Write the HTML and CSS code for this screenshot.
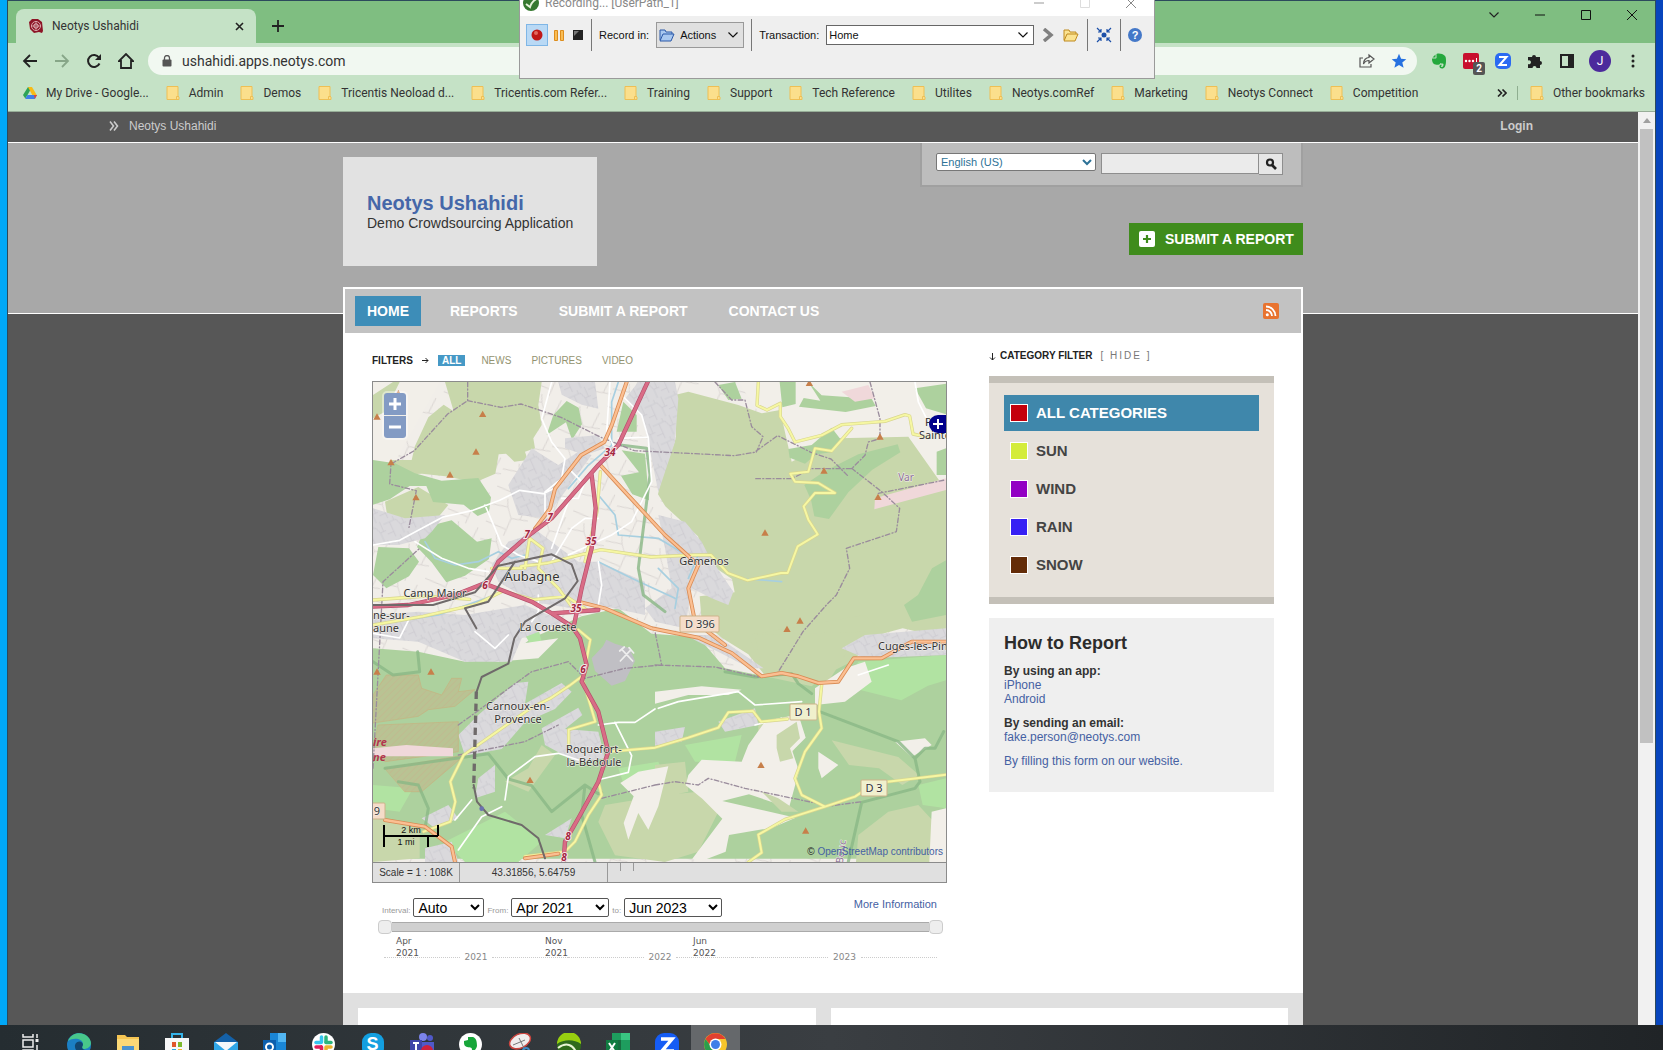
FILE: index.html
```html
<!DOCTYPE html>
<html lang="en">
<head>
<meta charset="utf-8">
<title>Neotys Ushahidi</title>
<link rel="stylesheet" href="styles.css">
</head>
<body>
<svg class="defs" aria-hidden="true">
  <symbol id="folder" viewBox="0 0 14 14"><path d="M1 .5h11v9.500l1 1V13.500H1z" fill="#fbdf8c" stroke="#eebf55"/><path d="M10.500 13.500V10.500h2.500" fill="none" stroke="#eebf55"/></symbol>
  <symbol id="chev" viewBox="0 0 10 6"><path d="M.5.5 5 5 9.500.5" fill="none" stroke="currentColor" stroke-width="1.200"/></symbol>
  <symbol id="peak" viewBox="-12 -12 24 24"><path d="M0-10 11 9H-11z" fill="#c77f4a"/></symbol>
</svg>

<div class="window">
  <header class="browser">
    <div class="tabstrip">
      <div class="tab">
        <svg width="16" height="16" viewBox="0 0 16 16"><path d="M1 4 4 1l6 0 4 3 1 9-1 2-3-1-5 1-4-4z" fill="#8d1526"/><circle cx="8" cy="8" r="4.500" fill="none" stroke="#e9c9c9" stroke-width=".8"/><circle cx="8" cy="8" r="2.200" fill="none" stroke="#e9c9c9"/><path d="M3 8h10M8 3v10" stroke="#e9c9c9" stroke-width=".5"/></svg>
        <span class="tab-title">Neotys Ushahidi</span>
        <button class="plain" aria-label="Close tab"><svg width="9" height="9" viewBox="0 0 9 9"><path d="M1 1l7 7M8 1 1 8" stroke="#222" stroke-width="1.600"/></svg></button>
      </div>
      <button class="plain newtab" aria-label="New tab"><svg width="12" height="12" viewBox="0 0 12 12"><path d="M6 0v12M0 6h12" stroke="#222" stroke-width="1.800"/></svg></button>
      <div class="wincontrols">
        <button class="plain" aria-label="Search tabs"><svg width="10" height="6"><use href="#chev"/></svg></button>
        <button class="plain" aria-label="Minimize"><svg width="10" height="2"><path d="M0 1h10" stroke="#111"/></svg></button>
        <button class="plain" aria-label="Maximize"><svg width="10" height="10"><path d="M.5.5h9v9h-9z" fill="none" stroke="#111"/></svg></button>
        <button class="plain" aria-label="Close"><svg width="10" height="10"><path d="M0 0l10 10M10 0 0 10" stroke="#111"/></svg></button>
      </div>
    </div>
    <div class="toolbar">
      <button class="plain" aria-label="Back"><svg width="16" height="16" viewBox="0 0 16 16"><path d="M15 8H2M8 2 2 8l6 6" fill="none" stroke="#222" stroke-width="1.800"/></svg></button>
      <button class="plain" aria-label="Forward"><svg width="16" height="16" viewBox="0 0 16 16"><path d="M1 8h13M8 2l6 6-6 6" fill="none" stroke="#87a688" stroke-width="1.800"/></svg></button>
      <button class="plain" aria-label="Reload"><svg width="16" height="16" viewBox="0 0 16 16"><path d="M13.500 10.500A6 6 0 1 1 13 4.500" fill="none" stroke="#222" stroke-width="2"/><path d="M15 1v6H9z" fill="#222"/></svg></button>
      <button class="plain" aria-label="Home"><svg width="16" height="16" viewBox="0 0 16 16"><path d="M3 15V8H1l7-7 7 7h-2v7z" fill="none" stroke="#222" stroke-width="1.800"/></svg></button>
      <div class="omnibox">
        <svg width="10" height="12" viewBox="0 0 10 12"><rect y="4.500" x=".5" width="9" height="7" rx="1" fill="#555"/><path d="M2.500 5V3a2.500 2.500 0 0 1 5 0v2" fill="none" stroke="#555" stroke-width="1.300"/></svg>
        <input class="url" aria-label="Address" value="ushahidi.apps.neotys.com">
        <svg width="16" height="16" viewBox="0 0 16 16"><path d="M4 5H1v9h11v-3" fill="none" stroke="#555" stroke-width="1.200"/><path d="M10 2l5 4-5 4V7.500C7 7.500 5.500 9 4.500 11 4.500 7 7 4.500 10 4.500z" fill="none" stroke="#555" stroke-width="1.200"/></svg>
        <svg width="16" height="16" viewBox="0 0 16 16"><path d="M8 .8l2.100 5 5.200.4-4 3.400 1.300 5.200L8 12l-4.600 2.800 1.300-5.200-4-3.400 5.200-.4z" fill="#2671e0"/></svg>
      </div>
      <div class="extensions">
        <svg width="16" height="16" viewBox="0 0 16 16"><path d="M5.500 1C8 0 12 1 13.500 2.500c1.500 1 1.500 3 1.500 5.500 0 5-1.500 7.500-4 7.500-3 0-3.500-4-.5-4v1.500c-1 0-1 1 .3 1 1.500 0 1.700-2 1.700-3-1-1-2 0-3-1-.5 2-3.500 2-5 1.500C1.500 11 1 8 1 5.500h3.500c.6 0 1-.4 1-1zM4.500 1.500v3h-3z" fill="#25a83d"/></svg>
        <span class="pass"><svg width="16" height="16" viewBox="0 0 16 16"><rect width="16" height="16" rx="2" fill="#c8102e"/><circle cx="3" cy="8" r="1.200" fill="#fff"/><circle cx="6.500" cy="8" r="1.200" fill="#fff"/><circle cx="10" cy="8" r="1.200" fill="#fff"/><path d="M13.500 5v6" stroke="#fff"/></svg><span class="badge">2</span></span>
        <svg width="16" height="16" viewBox="0 0 16 16"><rect width="16" height="16" rx="5" fill="#2a6af2"/><path d="M4 4h7.500L4.500 12H12" fill="none" stroke="#fff" stroke-width="2"/></svg>
        <svg width="16" height="16" viewBox="0 0 16 16"><path d="M1 4h4a2 2 0 1 1 4 0h4v4a2 2 0 1 1 0 4v3H9.500a2 2 0 1 0-4 0H1v-4a2 2 0 1 0 0-3.500z" fill="#222"/></svg>
        <svg width="16" height="16" viewBox="0 0 16 16"><path d="M2 2h12v12H2z" fill="none" stroke="#222" stroke-width="2"/><path d="M9 2h5v12H9z" fill="#222"/></svg>
        <span class="avatar">J</span>
        <svg class="dots" width="4" height="14" viewBox="0 0 4 14"><g fill="#222"><circle cx="2" cy="2" r="1.500"/><circle cx="2" cy="7" r="1.500"/><circle cx="2" cy="12" r="1.500"/></g></svg>
      </div>
    </div>
    <nav class="bookmarks" aria-label="Bookmarks">
      <a href="#"><svg width="14" height="14" viewBox="0 0 14 14"><path d="M5 1h4L4.500 9 2.300 12.500 0 9z" fill="#2da457"/><path d="M5 1h4l5 8.500H9.500z" fill="#f8bb17"/><path d="M4.300 9H14l-2.200 4H2.200z" fill="#3f80e8"/><path d="M11 9h3l-2.200 4z" fill="#e2453a"/></svg>My Drive - Google...</a>
      <a href="#"><svg width="14" height="14"><use href="#folder"/></svg>Admin</a>
      <a href="#"><svg width="14" height="14"><use href="#folder"/></svg>Demos</a>
      <a href="#"><svg width="14" height="14"><use href="#folder"/></svg>Tricentis Neoload d...</a>
      <a href="#"><svg width="14" height="14"><use href="#folder"/></svg>Tricentis.com Refer...</a>
      <a href="#"><svg width="14" height="14"><use href="#folder"/></svg>Training</a>
      <a href="#"><svg width="14" height="14"><use href="#folder"/></svg>Support</a>
      <a href="#"><svg width="14" height="14"><use href="#folder"/></svg>Tech Reference</a>
      <a href="#"><svg width="14" height="14"><use href="#folder"/></svg>Utilites</a>
      <a href="#"><svg width="14" height="14"><use href="#folder"/></svg>Neotys.comRef</a>
      <a href="#"><svg width="14" height="14"><use href="#folder"/></svg>Marketing</a>
      <a href="#"><svg width="14" height="14"><use href="#folder"/></svg>Neotys Connect</a>
      <a href="#"><svg width="14" height="14"><use href="#folder"/></svg>Competition</a>
      <button class="plain more" aria-label="More bookmarks"><svg width="10" height="8" viewBox="0 0 10 8"><path d="M1 .5 4.500 4 1 7.500M5.500.5 9 4 5.500 7.500" fill="none" stroke="#222" stroke-width="1.600"/></svg></button>
      <a class="other" href="#"><svg width="14" height="14"><use href="#folder"/></svg>Other bookmarks</a>
    </nav>
  </header>

  <div class="viewport">
    <div class="site">
      <div class="topbar">
        <a href="#"><svg width="10" height="10" viewBox="0 0 10 10"><path d="M1 .5 4.500 5 1 9.500M5 .5 8.500 5 5 9.500" fill="none" stroke="#ccc" stroke-width="1.600"/></svg>Neotys Ushahidi</a>
        <a class="login" href="#">Login</a>
      </div>
      <div class="banner">
        <div class="head">
          <div class="logo"><h1>Neotys Ushahidi</h1><p>Demo Crowdsourcing Application</p></div>
          <div class="head-right">
            <form class="searchbox">
              <select class="lang" aria-label="Language"><option>English (US)</option></select>
              <input class="query" aria-label="Search">
              <button class="go" type="button" aria-label="Search"><svg width="12" height="12" viewBox="0 0 12 12"><circle cx="5" cy="4.500" r="3" fill="none" stroke="#222" stroke-width="2.200"/><path d="M7 7l4 4" stroke="#222" stroke-width="2.600"/></svg></button>
            </form>
            <a class="submit" href="#"><svg width="16" height="16" viewBox="0 0 16 16"><rect width="16" height="16" rx="2" fill="#fff"/><path d="M8 4v8M4 8h8" stroke="#3f8c1c" stroke-width="2.200"/></svg>SUBMIT A REPORT</a>
          </div>
        </div>
      </div>
      <main class="main">
        <nav class="menu">
          <a class="on" href="#">HOME</a><a href="#">REPORTS</a><a href="#">SUBMIT A REPORT</a><a href="#">CONTACT US</a>
          <a class="rss" href="#" aria-label="RSS"><svg width="16" height="16" viewBox="0 0 16 16"><rect width="16" height="16" rx="2" fill="#e8732f"/><circle cx="4.300" cy="11.700" r="1.500" fill="#fff"/><path d="M3 7a6 6 0 0 1 6 6M3 3.500A9.500 9.500 0 0 1 12.500 13" fill="none" stroke="#fff" stroke-width="1.800"/></svg></a>
        </nav>
        <div class="columns">
          <section class="left">
            <div class="filters"><strong>FILTERS</strong><svg width="7" height="7" viewBox="0 0 7 7"><path d="M0 3.500h6M3.500 1 6 3.500 3.500 6" fill="none" stroke="#222"/></svg><a class="on" href="#">ALL</a><a href="#">NEWS</a><a href="#">PICTURES</a><a href="#">VIDEO</a></div>
            <div class="mapframe">
              <div class="map">
                <svg class="tiles" viewBox="0 0 573 480" preserveAspectRatio="xMidYMid slice">
                  <defs>
                    <pattern id="town" width="66" height="60" patternUnits="userSpaceOnUse" patternTransform="rotate(-24)"><rect width="66" height="60" fill="#dad9dc"/><path d="M0 12h40l8 20h18M20 12v48M48 32v28M0 44h20M34 0v12M58 0v32" fill="none" stroke="#c9c7cd" stroke-width="2"/></pattern>
                    <pattern id="fields" width="120" height="110" patternUnits="userSpaceOnUse" patternTransform="rotate(18)"><rect width="120" height="110" fill="#f1eee9"/><path d="M0 30l50-6 20 30 50-8M50 24l-8-24M70 54l-6 56M0 84l64 6M96 50l8-50" fill="none" stroke="#d6d1cf" stroke-width="2.500"/></pattern>
                    <pattern id="heath" width="14" height="14" patternUnits="userSpaceOnUse" patternTransform="rotate(45)"><rect width="14" height="14" fill="#b9c393"/><path d="M0 0v14" stroke="#c0ba90" stroke-width="5"/></pattern>
                  </defs>
                  <g transform="translate(-8 -7) scale(.33333)" stroke-linejoin="round" stroke-linecap="round">
                    <path fill="url(#fields)" d="M0 0h1760v1480H0z"/>
                    <path fill="#f2efe9" d="M24 21h200L90 260H24zM1120 21h623v330L1280 260z"/>
                    <g fill="#c8d7ab">
                      <path d="M240 21l40 0 60-5 190 5-10 69 10 60-25 40 5 30-30 10 8 25-40 5-25-24-22 2-10 58-60 26-90-18-70-8-97 4v-45l66 0 10-42 40-86 46-38 30 20z"/>
                      <path d="M24 60l60-39h20L60 110 24 130zM60 380l100-44 90 54-50 60-70 16-60-22z"/>
                      <path d="M930 60l40-10 150 40 70 25 55-10 35 155 140-70 210-5 113 160v445l-130-30-110 30-40 30-10 80-30 30-130 10-80-22-63-80-80-50-60-50-6-74 105-12-8-40-80-54-22-74-98-90-22-36 10-46 44-124z"/>
                      <path d="M1150 780l350-60 60 60-80 60-90 90-130-10-80-70z"/>
                    </g>
                    <g fill="#add19e">
                      <path d="M24 255l66 10 60 30 80 22 110-8 38 58-6 42-34 14-42-34-92-8-20-48-50 0-60 40-50 16z"/>
                      <path d="M180 456l80-20 76 64 44-10-8 62-72 50-56 20-44-60-44-46zM40 516l92 4 30 40-30 44-68 36-40-40zM545 180l20-60 40-42 36 20 10 50-30 46-18-52zM770 226l70 10 12 140-50-18-34-56 54-10zM755 170l20-90 40 40 0 50z"/>
                      <path d="M1244 21h48v66l-40 10zM1330 21l40 40 150 10 12 22-90 18-140-16 14-26 50 8zM1650 40l93-14v92l-60-18zM1270 222l70-12 60-52 26 34-26 40-46 6-34 28-46-18zM1318 330l62-42 100-50 118-30 8 24-84 52-72 68-58 80-44-8-10-50zM1743 556l-42 24-42 80-42 30 24 50 102-20zM1060 30l50-9 20 50-40 4zM1715 230l28-10v80h-28z"/>
                      <path d="M24 820l136 10 140 30 120-10 80-60 150-66 110-24 100 76 140 10 80 94 120 24 140 30 40-34 120-60 243-30v641H24z"/>
                    </g>
                    <path fill="#c8d7ab" d="M1170 780l330-10-60 70-50 80-110-4-90-30z"/>
                    <g fill="#b1e3a2"><path d="M1480 860l263-20v76l-54 16-80 44-120-30-40-36zM960 1110l170-30-20 80-120 0zM240 1400l180-90 110 90-70 61H300zM24 1230l120 10-40 70-80-10zM760 1180l120-20 20 50-120 30zM1660 1230l83-20v90l-70-10zM480 780l40-20 10 40-30 14z"/></g>
                    <g fill="#c8d7ab"><path d="M720 1290l180-30 100-10 60 60-60 120-100 31-150-20-50-100zM1400 1096l200 50 62 54-50 30-70-50-90-10zM1480 1380l90-70 90-20 83 90v81h-270zM490 1180l40-70 40 30-80 110-70-30zM1180 1040l110-20 30 60-60 80-80 0zM24 1330l140 20 0 100-140 11zM870 1170l90-10 10 90-100 20z"/></g>
                    <g fill="#f2efe9">
                      <path d="M970 1200l40-46 120 6 20-50 50-70 100-22 22 70-40 40 20 60-30 110-120-40-80 20 220 50-70 30-130 22-10 50-80 31-20-10 90-120-60-60-50-40z"/>
                      <path d="M820 1190l90-16-30 120-30 70-30-50-30 80-14-50 30-80-40-40zM1360 1130l60 40-50 40-10-30zM1700 1310l43-10v161h-50zM1590 1100l90-10 20 20-60 36zM1350 940l90-60 60-20 20 60-80 60-90 10zM300 850l140-40 140-20-60 60-120 10zM870 950l140-16 120 10-40 16-120 0-100 26z"/>
                    </g>
                    <path fill="#c8d7ab" d="M1235 1080l60-40 10 50-30 30 10 30-40 10-10-40zM1190 1250l50 20 60 40-50 0z"/>
                    <g fill="url(#town)">
                      <path d="M580 21h110l10 80-50-12-60-30zM820 21h110l10 50-10 130-50 150-30-150-20-80-50-50zM600 190l100-10 20 40-60 20-60-20zM500 220l80 50 60-40 40 10-80 110-60 80-80-10-30-90zM24 400l96 30 120-10-40 50-20 20-80 20-76 0zM430 500l90-30 120 90 60 0 140 60v100l-140-30-80 10-120-20-100-60-20-50z"/>
                      <path d="M880 420l80 20 50 60 20 40 75 110-15 40-50-20-60-30-20 120-90-20-30-40 80-60-20-120zM24 720l136-10 140 10 180-30 120 50-130 50-30 70-140 0-140-60-136-10z"/>
                      <path d="M1430 820l70-40 243-20v80l-243 10zM280 1080l60-60 110-96 40-4-10 66 110-62 30 26-50 52-90 40-70 80-110 20zM530 1060l110-62 12 22-52 42 100 8 20 80-80 14-100-54zM870 1070l90-14-10 44-80 12zM1060 1040l110-40 10 50-100 20zM170 1330l80-40 30 40-70 30zM180 1420l80-20 20 61h-100zM340 1210l50-40 0 80-60 20zM540 1380l80-50-20 60zM960 780l90 0 146 100-40 0z"/>
                    </g>
                    <path fill="#c0bfc4" d="M680 850l34-36 10-20 26 12 44 14 16 38-30 60-40 14-50-44z"/>
                    <path d="M766 858l32-34M792 818l14 16M771 824l32 34M764 828l14-12" fill="none" stroke="#eee" stroke-width="5"/>
                    <path fill="url(#heath)" stroke="#c6b27f" stroke-width="2" d="M24 960l40-60 96 0 10 40 60 20 30-50 30 0-10 40 50-6-60 50-80 10-30 20-136 20zM40 1050l240-10 0 90-220 30-36-30zM60 1180l240-40-130 110-50 0z"/>
                    <path fill="#f0d8da" d="M24 1120l100-10 140 10 0 24-240 0zM1530 370l213-60v35l-215 58zM1430 50l80-20 20 40-60 10z"/>
                    <g fill="none" stroke="#a7cfe0" stroke-width="5"><path d="M760 21l-20 60 0 130-70 60-60 70M700 360l50 60 10 60 120 10 100 60M180 500l30 50 60 20 70-10 60-30 40 20 40-10M700 560l100 50 130 60M880 580l60 60-10 60M90 740l130-20 170-60M970 610l30-70M1130 610l120 10"/></g>
                    <g fill="none" stroke="#8ab886" stroke-width="9" opacity=".8"><path d="M765 210l80 10 10 80-35 280 15 80 65 50"/><path d="M1364 1010l236 90 50 50 15 70-15 20-160 42-40 178M1650 1150l30-30 30 0 26-50M60 1180l310-44 60 76 70 20 60 78 100-80 40 26 10-4M24 860l60 40 80-10-6-60M100 1220l60 10 30 70-10 60M660 1230l-10 90 40 141M1080 890l90 16 110-10 20 30 40 30"/></g>
                    <g fill="none" stroke="#9a8c9c" stroke-width="4" stroke-dasharray="14 7 3 7"><path d="M308 21v56l-60 40-100 110-70 40-4 60 80 20-22 110M308 77l100 20 60-10 120 40 120 60 100 40 300 15 60-10 70-50 100 50 60 20 50 50M1050 21l50 54 40 0 20 80 34 30-20 46M1515 21l30 110 0 60-35 10-10 40-40 40-120 0-60 30-110 0M1460 280l90 70 54 50-10 70-150 50 10 60-40 80-30 30-70 80-80 130M1540 355l200-40M870 870l180 6 130 30M24 1180l30-560 110-100M280 1050l220-160 110-30 50 50 120-30 110-10-20-100M280 1140l200-40 100-50M870 1230l60-10 70 10 30-20 110 30 240 50M1380 1295l110-15M710 1270l160-40"/></g>
                    <g fill="none" stroke="#fff" stroke-width="5"><path d="M24 510l80-14 130-70 90-20 80-30 60-30 70 10 30-14M560 21l-30 110 30 70 40 50-10 60-50 40 0 60M735 21l-10 150 30 60M770 60l60 60 20 70 10 130-60 120-60 40-130 60M620 290l30 30-40 60-50 140M360 390l30 70 20 50 50 30 60 20M150 500l80 50 80 30 60 10M700 560l10 70-10 60M500 740l20-30 0-50M560 560l60-100 40-30 40 0M24 775l80 14 30-60M330 770l60 50 40-40M700 1050l60-8 50 0 60-40M750 1042l30 60 20 40-10 50-80 20M430 1205l80-60 70-10 60 20M430 1205l-10 70M270 1335l50-60M280 1425l70-100 60-30M880 1000l60-20 180-30 50 40 140-10M1170 1050l80-20M1480 900l90-30M1650 21l10 60 50 100M760 190l90-4M590 370l50 0 20-50"/></g>
                    <g fill="none" stroke="#d8d68f" stroke-width="10"><path id="sec" fill="none" d="M1180 21l-4 70 30 14 40-20 0 40 24 36 20 40 80-20 60-32 130-10 60-20 14 4 10 54 46 10M1460 160l-60 68-50-8-20 70-54 6 14 24 70 4 50 30-60 0-34 40 14 40 28 44-60 36-30 80-20 0-100 22-60-22-50-54-50 0-130 6-150-22-80 20-80 20-80 10M706 290l-10 120-36 150M480 580l14-90 40 30-14 60 60 60 44 60M380 580l90 0M640 764l36 30-20 106-40 30-60 40-60 30-100 70-100 70-40 80 15 60-15 60-80 30M655 920l36 120-80 24 0 50M730 1130l140-12 100-30 90-30 30-46 74-4 24 32 80-8M1370 930l-8 80 8 50-50 70-30 80 20 50 70 35 90-30 60-40 213-26M1380 1295l-120 38-80 46 10 54-40 28M700 1220l10 40-40 60-40 80-30 30-120 14M24 675l160-12 130 10M24 750l150-26 160-36 80-40 90 26 100-10 60 40"/></g>
                    <use href="#sec" class="secondary"/>
                    <g fill="none" stroke="#d98c55" stroke-width="12"><path id="pri" fill="none" d="M785 21l-45 130-22 50-70 40-78 100-15 60-45 60M706 270l64 70 130 140 100 90-30 70 20 100 90 70M640 680l80 20 140 60 140 28 100 46 90 70 60-10 50 10 60 20 60-4 46-70 84 0 90-50 123 0M60 1335l120 20 80 60 10 46M480 1450l100-14"/></g>
                    <use href="#pri" class="primary"/>
                    <g fill="none" stroke="#b5506c" stroke-width="13"><path id="mot" fill="none" d="M848 21l-88 189-60 60-140 160-80 60-80 70-30 60-100 40-140 30-110 5M680 300l12 100-12 120-30 120-25 120 20 30 20 80-15 50 50 90 30 120-30 90-60 110-40 70-5 71M370 630l130 50 60 35 62 40M560 715l140-10"/></g>
                    <use href="#mot" class="motorway"/>
                    <path fill="none" stroke="#6f6a6a" stroke-width="6" d="M24 690l180 0 126-38 70-80 160-34 60 30 18 50-38 52-120 70-32 50-18 76-80 40-17 50M326 1230l10 50 34 40 100 30 50 40 20 60M300 700l70-20 80-120M300 700l34 60"/>
                    <path fill="none" stroke="#6f6a6a" stroke-width="10" stroke-dasharray="22 14" stroke-linecap="butt" d="M334 950l-8 290"/>
                    <circle cx="350" cy="1301" r="7" fill="#6b72b0"/>
                    <g><use href="#peak" x="88" y="43" width="24" height="24"/><use href="#peak" x="24" y="113" width="24" height="24"/><use href="#peak" x="341" y="105" width="24" height="24"/><use href="#peak" x="321" y="218" width="24" height="24"/><use href="#peak" x="243" y="287" width="24" height="24"/><use href="#peak" x="66" y="250" width="24" height="24"/><use href="#peak" x="141" y="355" width="24" height="24"/><use href="#peak" x="1321" y="12" width="24" height="24"/><use href="#peak" x="1533" y="173" width="24" height="24"/><use href="#peak" x="1365" y="275" width="24" height="24"/><use href="#peak" x="1527" y="354" width="24" height="24"/><use href="#peak" x="1188" y="461" width="24" height="24"/><use href="#peak" x="1293" y="725" width="24" height="24"/><use href="#peak" x="1254" y="750" width="24" height="24"/><use href="#peak" x="24" y="878" width="24" height="24"/><use href="#peak" x="186" y="878" width="24" height="24"/><use href="#peak" x="483" y="1203" width="24" height="24"/><use href="#peak" x="1176" y="1158" width="24" height="24"/><use href="#peak" x="1310" y="1355" width="24" height="24"/></g>
                  </g>
                  <g stroke="#cdb38a"><rect x="307" y="234" width="39" height="16" rx="1" fill="#f5dcc8"/><rect x="417" y="322" width="27" height="16" rx="1" fill="#f0f0cc"/><rect x="488" y="398" width="26" height="16" rx="1" fill="#f0f0cc"/><rect x="-4" y="421" width="16" height="16" rx="1" fill="#f5dcc8"/></g>
                  <g class="place">
                    <text class="big" x="159" y="199">Aubagne</text><text x="62" y="215">Camp Major</text><text x="331" y="183">Gémenos</text><text x="175" y="249">La Coueste</text>
                    <text class="start" x="0" y="237">ne-sur-</text><text class="start" x="0" y="250">aune</text><text class="start" x="505" y="268">Cuges-les-Pins</text>
                    <text x="145" y="328">Carnoux-en-</text><text x="145" y="341">Provence</text><text x="221" y="371">Roquefort-</text><text x="221" y="384">la-Bédoule</text>
                    <text x="327" y="246">D 396</text><text x="430" y="334">D 1</text><text x="501" y="410">D 3</text><text x="4" y="433">9</text>
                    <text class="start" x="552" y="44">P</text><text x="562" y="57">Sainte</text>
                    <text class="region" x="533" y="99">Var</text><text class="region" transform="rotate(-82 470 466)" x="466" y="468">Bouc</text>
                  </g>
                  <g class="exit"><text x="237" y="74">34</text><text x="177" y="139">7</text><text x="154" y="156">7</text><text x="218" y="163">35</text><text x="112" y="207">6</text><text x="203" y="230">35</text><text x="210" y="291">6</text><text x="195" y="458">8</text><text x="191" y="479">8</text></g>
                  <g class="zone"><text x="0" y="364">ire</text><text x="0" y="379">ne</text></g>
                  <path d="M573 33h-8a9 9 0 0 0 0 18h8z" fill="#00008b"/><path d="M565 37v10M560 42h10" stroke="#fff" stroke-width="2"/>
                  <path d="M11 443v22M11 454h54M65 443v11M55 454v11" fill="none" stroke="#000" stroke-width="2"/>
                  <g class="ruler"><text x="38" y="451">2 km</text><text x="33" y="463">1 mi</text></g>
                </svg>
                <div class="zoom"><button aria-label="Zoom in"><svg width="12" height="12"><path d="M6 0v12M0 6h12" stroke="#fff" stroke-width="3"/></svg></button><button aria-label="Zoom out"><svg width="12" height="12"><path d="M0 6h12" stroke="#fff" stroke-width="3"/></svg></button></div>
                <p class="credit">© <a href="#">OpenStreetMap contributors</a></p>
              </div>
              <div class="status"><span class="c1">Scale = 1 : 108K</span><span class="c2">43.31856, 5.64759</span><span class="c3"><i></i><i></i></span></div>
            </div>
            <div class="range">
              <label for="iv">Interval:</label><select id="iv" class="s1"><option>Auto</option></select>
              <label for="fr">From:</label><select id="fr" class="s2"><option>Apr 2021</option></select>
              <label for="to">to:</label><select id="to" class="s2"><option>Jun 2023</option></select>
              <a href="#">More Information</a>
            </div>
            <div class="slider"><button aria-label="Start date"></button><span></span><button aria-label="End date"></button></div>
            <div class="ticks"><span>Apr<br>2021</span><span>Nov<br>2021</span><span>Jun<br>2022</span></div>
            <div class="years"><span class="y1">2021</span><span class="y2">2022</span><span class="y3">2023</span></div>
          </section>
          <aside class="right">
            <h2><svg width="7" height="8" viewBox="0 0 7 8"><path d="M3.500 0v7M1 4.500 3.500 7 6 4.500" fill="none" stroke="#222"/></svg>CATEGORY FILTER <a href="#">[ HIDE ]</a></h2>
            <ul class="cats">
              <li><a class="on" href="#"><i class="red"></i>ALL CATEGORIES</a></li>
              <li><a href="#"><i class="sun"></i>SUN</a></li>
              <li><a href="#"><i class="wind"></i>WIND</a></li>
              <li><a href="#"><i class="rain"></i>RAIN</a></li>
              <li><a href="#"><i class="snow"></i>SNOW</a></li>
            </ul>
            <div class="howto">
              <h3>How to Report</h3>
              <p><strong>By using an app:</strong><br><a href="#">iPhone</a><br><a href="#">Android</a></p>
              <p><strong>By sending an email:</strong><br><a href="#">fake.person@neotys.com</a></p>
              <p><a href="#">By filling this form on our website.</a></p>
            </div>
          </aside>
        </div>
        <div class="lower"><div></div><div></div></div>
      </main>
    </div>
    <div class="scrollbar"><svg width="8" height="5"><path d="M0 5 4 0l4 5z" fill="#a0a0a0"/></svg><div class="thumb"></div></div>
  </div>
</div>

<section class="recorder" aria-label="Recording">
  <div class="rec-title">
    <svg width="16" height="16" viewBox="0 0 16 16"><circle cx="8" cy="8" r="8" fill="#35782f"/><path d="M3 9l4 3C8 8 11 5 15 3" fill="none" stroke="#e4f2d8" stroke-width="2"/></svg>
    <span>Recording... [UserPath_1]</span>
    <svg width="10" height="10"><path d="M0 5h10" stroke="#999"/></svg>
    <svg width="10" height="10"><path d="M.5.5h9v9h-9z" fill="none" stroke="#ddd"/></svg>
    <svg width="10" height="10"><path d="M0 0l10 10M10 0 0 10" stroke="#888"/></svg>
  </div>
  <div class="rec-bar">
    <button class="rec on" aria-label="Record"><svg width="12" height="12"><circle cx="6" cy="6" r="5.500" fill="#c01818"/><circle cx="5" cy="4" r="2" fill="#e26a60"/></svg></button>
    <button class="rec" aria-label="Pause"><svg width="10" height="11"><path d="M.5.5h3v10h-3zM6.500.5h3v10h-3z" fill="#f9bd55" stroke="#dd8d1d"/></svg></button>
    <button class="rec" aria-label="Stop"><svg width="10" height="10"><path d="M0 0h10v10H0z" fill="#222"/><path d="M1 1h5L1 6z" fill="#777"/></svg></button>
    <hr>
    <label for="recin">Record in:</label>
    <span class="combo gray"><svg width="16" height="14" viewBox="0 0 16 14"><path d="M1 12V2h5l1 2h6v2h2l-3 7H1l3-7h9" fill="#a9c8f0" stroke="#2a58a8"/></svg><select id="recin"><option>Actions</option></select><svg width="10" height="6"><use href="#chev"/></svg></span>
    <hr>
    <label for="trans">Transaction:</label>
    <span class="combo wide"><select id="trans"><option>Home</option></select><svg width="10" height="6"><use href="#chev"/></svg></span>
    <button class="rec" aria-label="Next"><svg width="12" height="14"><path d="M2 1l7 6-7 6" fill="none" stroke="#808080" stroke-width="3.500"/></svg></button>
    <button class="rec" aria-label="Open"><svg width="16" height="14" viewBox="0 0 16 14"><path d="M1 12V2h5l1 2h6v2h2l-3 7H1l3-7h9" fill="#fbe391" stroke="#bf8a1e"/></svg></button>
    <hr>
    <button class="rec" aria-label="Collapse"><svg width="16" height="16" viewBox="0 0 16 16"><circle cx="8" cy="8" r="2.500" fill="#1b4fa8"/><path d="M1 1l4 4M2 5h3V2M15 1l-4 4M11 2v3h3M1 15l4-4M2 11h3v3M15 15l-4-4M14 11h-3v3" fill="none" stroke="#1b4fa8" stroke-width="1.200"/></svg></button>
    <hr>
    <button class="rec help" aria-label="Help">?</button>
  </div>
</section>

<footer class="taskbar">
  <button aria-label="Task view"><svg width="20" height="20" viewBox="0 0 20 20"><path d="M3 1v3h10V1M3 20v-3h10v3M3 7h10v7H3zM17 1v4M17 12v8" fill="none" stroke="#eee" stroke-width="1.500"/><path d="M15.500 6h3v3h-3z" fill="#eee"/></svg></button>
  <button aria-label="Edge"><svg width="24" height="24" viewBox="0 0 24 24"><circle cx="12" cy="12" r="12" fill="#1b7fc4"/><path d="M1 8C4 0 14-2 20 3s5 12-2 13c-4 0-3-3-2-5 0-5-9-7-15-3z" fill="#48c78a"/><path d="M8 12c2-5 8-4 8 0-1 2-2 4 2 5-4 4-11 2-10-5z" fill="#12466f"/></svg></button>
  <button aria-label="File Explorer"><svg width="22" height="20" viewBox="0 0 22 20"><path d="M0 2h8l2 2h12v16H0z" fill="#f5c553"/><path d="M0 6h22v14H0z" fill="#fbd977"/><path d="M5 13h12v7H5z" fill="#4a93cf"/></svg></button>
  <button aria-label="Store"><svg width="24" height="22" viewBox="0 0 24 22"><path d="M7 5V1h10v4" fill="none" stroke="#35b4ea" stroke-width="2"/><path d="M0 5h24v17H0z" fill="#f7f7f7"/><path d="M7 9h4v5H7z" fill="#e0552c"/><path d="M13 9h4v5h-4z" fill="#7db92c"/><path d="M7 16h4v5H7z" fill="#2ba3e0"/><path d="M13 16h4v5h-4z" fill="#f5b62a"/></svg></button>
  <button aria-label="Mail"><svg width="24" height="22" viewBox="0 0 24 22"><path d="M0 9 12 0l12 9v13H0z" fill="#1461a8"/><path d="M0 9h24v13H0z" fill="#2fa6e8"/><path d="M1 9h22l-11 9z" fill="#f4f8fb"/></svg></button>
  <button aria-label="Outlook"><svg width="24" height="22" viewBox="0 0 24 22"><path d="M7 0h16v22H7z" fill="#1a86d6"/><path d="M15 0h8v9h-8z" fill="#52b6f2"/><path d="M0 7h13v14H0z" fill="#0c5fae"/><circle cx="6.500" cy="14" r="3.500" fill="none" stroke="#fff" stroke-width="2"/></svg></button>
  <button aria-label="Slack"><svg width="23" height="23" viewBox="0 0 23 23"><circle cx="11.500" cy="11.500" r="11.500" fill="#fff"/><g stroke-width="3.500" stroke-linecap="round"><path d="M9.500 4v5" stroke="#36c5f0"/><path d="M14 4v5" stroke="#2eb67d"/><path d="M4 9.500h5" stroke="#36c5f0"/><path d="M14 9.500h5" stroke="#2eb67d"/><path d="M4 14h5M9.500 14v5" stroke="#e01e5a"/><path d="M14 14h5M14 14v5" stroke="#ecb22e"/></g></svg></button>
  <button aria-label="Skype"><svg width="22" height="22" viewBox="0 0 22 22"><rect width="22" height="24" rx="9" fill="#139fe0"/></svg><b>S</b></button>
  <button aria-label="Teams"><svg width="24" height="22" viewBox="0 0 24 22"><circle cx="13" cy="4" r="4" fill="#7b83eb"/><circle cx="20" cy="5" r="3" fill="#5059c9"/><path d="M8 9h16v13H8z" fill="#5059c9"/><path d="M0 7h12v13H0z" fill="#4045a8"/><path d="M3 10h6M6 10v8" stroke="#fff" stroke-width="2"/><circle cx="17" cy="18" r="6" fill="#d0213c"/></svg></button>
  <button aria-label="Evernote"><svg width="23" height="23" viewBox="0 0 23 23"><circle cx="11.500" cy="11.500" r="11.500" fill="#fff"/><path d="M9 4h5c3 1 4 4 4 9-1 4-3 5-5 4 0-3-1-2-5-3-3-1-3-3-3-6l4-1z" fill="#17a63a"/></svg></button>
  <button aria-label="Snipping tool"><svg width="24" height="22" viewBox="0 0 24 22"><ellipse cx="12" cy="8" rx="11" ry="7" transform="rotate(-25 12 8)" fill="#f0eded" stroke="#c9453f" stroke-width="1.500"/><path d="M11 5l6 12M5 12l12-5" stroke="#777"/><circle cx="18" cy="18" r="3" fill="none" stroke="#4089c4" stroke-width="2"/></svg></button>
  <button aria-label="NeoLoad"><svg width="24" height="24" viewBox="0 0 24 24"><circle cx="12" cy="12" r="12" fill="#2f6b1c"/><path d="M0 11a12 12 0 0 1 24 0c-7-5-17-5-24 0z" fill="#98cf10"/><path d="M1 15c8-6 15-4 19 6" fill="none" stroke="#e8f4d4" stroke-width="2"/></svg></button>
  <button aria-label="Excel"><svg width="24" height="22" viewBox="0 0 24 22"><path d="M6 0h18v22H6z" fill="#1e9d5e"/><path d="M15 0h9v7h-9z" fill="#39c481"/><path d="M6 7h9v15H6z" fill="#176d40"/><path d="M0 7h12v15H0z" fill="#107c41"/><path d="M3 10l6 9M9 10l-6 9" stroke="#fff" stroke-width="2"/></svg></button>
  <button aria-label="Zoom"><svg width="24" height="24" viewBox="0 0 24 24"><rect width="24" height="26" rx="9" fill="#155cf5"/><path d="M6 6h11L7 18h12" fill="none" stroke="#fff" stroke-width="3.500"/></svg></button>
  <button class="on" aria-label="Chrome"><svg width="23" height="23" viewBox="0 0 23 23"><circle cx="11.500" cy="11.500" r="11.500" fill="#f7c52b"/><path d="M1.500 6A11.500 11.500 0 0 1 21.500 6h-10l-4 8z" fill="#e2402f"/><path d="M1.500 6a11.500 11.500 0 0 0 9 17l4-7-7-2z" fill="#2b9e4c"/><circle cx="11.500" cy="11.500" r="6" fill="#fff"/><circle cx="11.500" cy="11.500" r="4.500" fill="#3f7fe8"/></svg></button>
</footer>
</body>
</html>
```

FILE: styles.css
```css
* { box-sizing: border-box; }
body {
  margin: 0;
  height: 100vh;
  overflow: hidden;
  display: flex;
  flex-direction: column;
  background: linear-gradient(90deg, #00a8f8 50%, #0745bd 50%);
  font-family: "Liberation Sans", Arial, sans-serif;
  font-size: 12px;
  color: #333;
}
h1, h2, h3, p, ul { margin: 0; padding: 0; }
a { text-decoration: none; color: #4561a3; }
svg { display: block; flex: none; }
button, input, select { font-family: inherit; }
.defs { position: absolute; width: 0; height: 0; }
.plain { border: 0; padding: 0; background: none; color: #222; }

/* Browser window */
.window {
  flex: 1;
  min-height: 0;
  margin: 0 7px;
  border: solid #2c4a5c;
  border-width: 1px 1px 0;
  display: flex;
  flex-direction: column;
}
.browser { background: #c5e2c6; font-family: Roboto, "Open Sans", sans-serif; border-bottom: 1px solid #97ad98; }
.tabstrip { height: 42px; background: #7fbe81; display: flex; align-items: flex-end; padding-left: 8px; }
.tab {
  width: 240px; height: 34px; background: #c5e2c6; border-radius: 8px 8px 0 0;
  display: flex; align-items: center; gap: 8px; padding: 0 12px;
}
.tab-title { flex: 1; }
.newtab { margin: 0 0 11px 16px; }
.wincontrols { margin-left: auto; align-self: flex-start; height: 28px; display: flex; align-items: center; gap: 36px; padding-right: 18px; }
.toolbar { height: 38px; display: flex; align-items: center; gap: 16px; padding: 0 20px 2px 14px; }
.omnibox { flex: 1; height: 28px; margin-left: -2px; border-radius: 14px; background: #f1f8f1; display: flex; align-items: center; gap: 16px; padding: 0 10px 0 14px; }
.url { flex: 1; border: 0; background: none; font-size: 14px; color: #333; margin-left: -6px; padding: 0; }
.extensions { display: flex; align-items: center; gap: 16px; margin-left: -2px; }
.dots { margin-left: 6px; }
.pass { position: relative; }
.badge { position: absolute; left: 10px; top: 9px; width: 12px; height: 13px; border-radius: 2px; background: #555; color: #fff; font-weight: bold; font-size: 10px; line-height: 13px; text-align: center; }
.avatar { width: 22px; height: 22px; border-radius: 50%; background: #4c2a9c; color: #fff; text-align: center; line-height: 22px; margin: 0 -2px; }
.bookmarks { height: 30px; display: flex; align-items: center; gap: 17px; padding: 0 10px 6px 15px; }
.bookmarks a { display: flex; align-items: center; gap: 9px; color: #333; white-space: nowrap; }
.bookmarks .more { margin-left: auto; margin-right: -7px; }
.bookmarks .other { border-left: 1px solid #8fae90; padding-left: 12px; }

/* Web page */
.viewport { flex: 1; min-height: 0; overflow: hidden; display: flex; background: #575757; }
.site { flex: 1; min-width: 0; }
.topbar { height: 30px; background: #575757; display: flex; align-items: center; justify-content: space-between; padding: 0 105px 2px 101px; }
.topbar a { color: #ccc; display: flex; align-items: center; gap: 10px; }
.topbar .login { font-weight: bold; }
.banner { height: 172px; background: #a8a8a8; border: solid #fff; border-width: 1px 0; }
.head { width: 960px; margin: 0 auto; display: flex; justify-content: space-between; align-items: flex-start; }
.logo { margin-top: 14px; height: 109px; background: #e2e2e2; padding: 34px 24px 0; color: #333; }
.logo h1 { font-size: 20px; line-height: 24px; color: #4567a9; }
.logo p { font-size: 14px; line-height: 16px; }
.head-right { display: flex; flex-direction: column; align-items: flex-end; }
.searchbox { width: 383px; height: 44px; background: #bdbdbd; border: 2px solid #a0a0a0; border-top: 0; display: flex; padding: 10px 18px 0 14px; }
.lang { width: 160px; height: 18px; font-size: 11px; color: #2d7297; background: #fff; border: 1px solid #777; border-radius: 2px; padding: 0; }
.query { flex: 1; min-width: 0; margin-left: 5px; height: 21px; border: 1px solid #8e8e8e; background: #ebebeb; }
.go { width: 24px; height: 22px; border: 1px solid #8e8e8e; border-left: 0; background: #e6e6e6; padding: 0; display: grid; place-items: center; }
.submit { margin-top: 36px; width: 174px; height: 32px; background: #3f8c1c; color: #fff; font-weight: bold; font-size: 14px; display: flex; align-items: center; gap: 10px; padding-left: 10px; }
.main { width: 960px; margin: -27px auto 0; position: relative; background: #fff; border-top: 2px solid #fff; }
.menu { margin: 0 2px; height: 44px; background: #c2c2c2; display: flex; align-items: center; gap: 17px; padding: 0 22px 0 10px; }
.menu a { padding: 0 12px; line-height: 30px; color: #fff; font-weight: bold; font-size: 14px; }
.menu .on { background: #3d8db8; }
.menu .rss { margin-left: auto; padding: 0; }
.columns { display: flex; justify-content: space-between; height: 660px; padding: 0 29px; }
.left { width: 575px; }
.right { width: 285px; }
.filters { height: 48px; padding-top: 6px; display: flex; align-items: center; gap: 9px; font-size: 10px; color: #222; }
.filters a { color: #93936f; margin-right: 11px; line-height: 11px; }
.filters .on { background: #4699c6; color: #fff; font-weight: bold; padding: 0 4px; margin-right: 7px; }
.mapframe { border: 1px solid #8b8b8b; }
.map { position: relative; height: 480px; overflow: hidden; }
.tiles { width: 100%; height: 100%; }
.secondary { stroke: #f6f7a2; stroke-width: 6px; }
.primary { stroke: #fbbf92; stroke-width: 7px; }
.motorway { stroke: #d96c86; stroke-width: 9px; }
.place { font-family: "Noto Sans", sans-serif; font-size: 11px; fill: #333; text-anchor: middle; paint-order: stroke; stroke: #f4f1ec; stroke-width: 1px; }
.place .big { font-size: 13px; }
.place .start { text-anchor: start; }
.place .region { fill: #8b6f94; font-size: 10px; }
.exit { font-family: "Noto Sans", sans-serif; font-size: 10px; font-style: italic; font-weight: bold; fill: #a3263f; text-anchor: middle; paint-order: stroke; stroke: #f8e6ea; stroke-width: 2px; }
.zone { font-family: "Noto Sans", sans-serif; font-size: 11px; font-style: italic; font-weight: bold; fill: #b3344e; }
.ruler { font-size: 9px; text-anchor: middle; fill: #111; }
.zoom { position: absolute; left: 11px; top: 11px; width: 22px; display: grid; gap: 1px; outline: 2px solid rgba(255,255,255,.4); border-radius: 3px; }
.zoom button { height: 22px; border: 0; padding: 0; border-radius: 3px 3px 0 0; background: #839bc4; display: grid; place-items: center; }
.zoom button + button { border-radius: 0 0 3px 3px; }
.credit { position: absolute; right: 3px; bottom: 4px; font-size: 10px; line-height: 12px; color: #222; }
.status { height: 20px; border-top: 1px solid #8b8b8b; background: #e0e0e0; display: flex; font-size: 10px; line-height: 20px; text-align: center; color: #333; }
.c1 { width: 87px; border-right: 1px solid #999; }
.c2 { width: 148px; border-right: 1px solid #999; }
.c3 { display: flex; gap: 12px; padding-left: 12px; }
.c3 i { width: 1px; height: 8px; background: #999; }
.range { margin: 14px 10px 0; height: 21px; display: flex; align-items: center; gap: 3px; }
.range label { font-size: 8px; color: #999; align-self: flex-end; line-height: 14px; }
.range select { height: 19px; font-size: 14px; padding: 0; border: 1px solid #555; border-radius: 2px; background: #fff; color: #000; }
.s1 { width: 71px; }
.s2 { width: 98px; }
.range a { margin-left: auto; line-height: 14px; align-self: flex-start; font-size: 11px; }
.slider { margin: 2px 4px 0 6px; display: flex; align-items: center; }
.slider span { flex: 1; height: 10px; background: #d0d0d0; border: solid #aaa; border-width: 1px 0; }
.slider button { width: 14px; height: 14px; padding: 0; border: 1px solid #ccc; border-radius: 4px; background: #eee; }
.ticks { margin: 1px 0 0 24px; height: 24px; display: grid; grid-template-columns: 149px 148px 1fr; font: 9px/12px "DejaVu Sans", sans-serif; color: #555; }
.years { margin: -8px 10px 0 12px; display: grid; grid-template-columns: 184px 184px 1fr; font: 9px/12px "DejaVu Sans", sans-serif; color: #888; }
.years span { display: flex; align-items: center; gap: 5px; }
.years span::before, .years span::after { content: ""; flex: 1; border-top: 1px dotted #ccc; }
.right h2 { font-size: 10px; line-height: 12px; height: 43px; padding-top: 17px; display: flex; gap: 4px; align-items: flex-start; color: #222; }
.right h2 svg { margin-top: 3px; }
.right h2 a { font-weight: normal; color: #777; margin-left: 4px; letter-spacing: 2px; }
.cats { list-style: none; border: solid #c4c0b8; border-width: 7px 0; background: #e6e1da; padding: 12px 15px 14px; display: grid; gap: 2px; }
.cats a { height: 36px; display: flex; align-items: center; gap: 8px; padding: 0 0 1px 6px; font-weight: bold; font-size: 15px; color: #444; }
.cats .on { background: #3f87ab; color: #fff; }
.cats i { width: 18px; height: 18px; border: 1px solid #fff; }
.red { background: #c4000c; } .sun { background: #d4ec3a; } .wind { background: #9300c4; } .rain { background: #3620f4; } .snow { background: #642c08; }
.howto { margin-top: 14px; background: #efefef; padding: 14px 15px; line-height: 14px; }
.howto h3 { font-size: 18px; line-height: 22px; margin-bottom: 10px; color: #2c2c2c; }
.howto p { margin-bottom: 10px; }
.lower { background: #e0e0e0; display: grid; grid-template-columns: 1fr 1fr; gap: 15px; padding: 15px 15px 0; }
.lower div { background: #fff; height: 200px; }
.scrollbar { width: 17px; background: #f1f1f1; display: flex; flex-direction: column; align-items: center; gap: 6px; padding-top: 6px; }
.thumb { width: 13px; height: 614px; background: #c1c1c1; }

/* Recorder window floating over the browser */
.recorder { position: absolute; left: 519px; top: 0; width: 636px; height: 79px; border: 1px solid #9a9a9a; border-top: 0; background: #efefef; overflow: hidden; font-size: 11px; color: #111; }
.rec-title { height: 16px; background: #fff; display: flex; align-items: flex-start; gap: 36px; padding-right: 18px; font: 12px/14px Roboto, sans-serif; color: #888; }
.rec-title svg, .rec-title span { margin-top: -4px; }
.rec-title svg:first-child { margin: -5px -30px 0 3px; }
.rec-title span { flex: 1; }
.rec-title svg { margin-top: -2px; }
.rec-bar { display: flex; align-items: center; height: 38px; padding: 0 12px 0 6px; gap: 7px; }
.rec-bar hr { width: 1px; height: 32px; border: 0; margin: 0; background: #777; }
.rec { border: 0; padding: 0 1px; height: 22px; background: none; display: grid; place-items: center; }
.rec.on { width: 22px; background: #b9d9f5; border: 1px solid #7fb6e6; margin-right: -2px; }
.help { width: 14px; height: 14px; border-radius: 50%; background: #4478c8; color: #fff; font-weight: bold; font-size: 11px; padding: 0; }
.combo { display: flex; align-items: center; height: 20px; border: 1px solid #666; background: #fff; padding: 0 5px 0 2px; }
.combo select { appearance: none; border: 0; background: none; font-size: 11px; flex: 1; padding: 0; color: #111; }
.combo.gray { width: 88px; height: 26px; border-color: #999; background: #e0e0e0; gap: 5px; }
.combo.wide { flex: 1; }

/* Taskbar, running off the bottom edge */
.taskbar { height: 25px; background: linear-gradient(90deg, #252d31, #3a3e42 50%, #202427); display: flex; padding-left: 5px; overflow: hidden; position: relative; }
.taskbar button { flex: none; width: 49px; height: 32px; border: 0; padding: 8px 0 0; background: none; display: grid; justify-items: center; align-items: start; }
.taskbar svg, .taskbar b { grid-area: 1 / 1; }
.taskbar b { color: #fff; font-size: 18px; line-height: 22px; }
.taskbar .on { background: #65686b; }
```
